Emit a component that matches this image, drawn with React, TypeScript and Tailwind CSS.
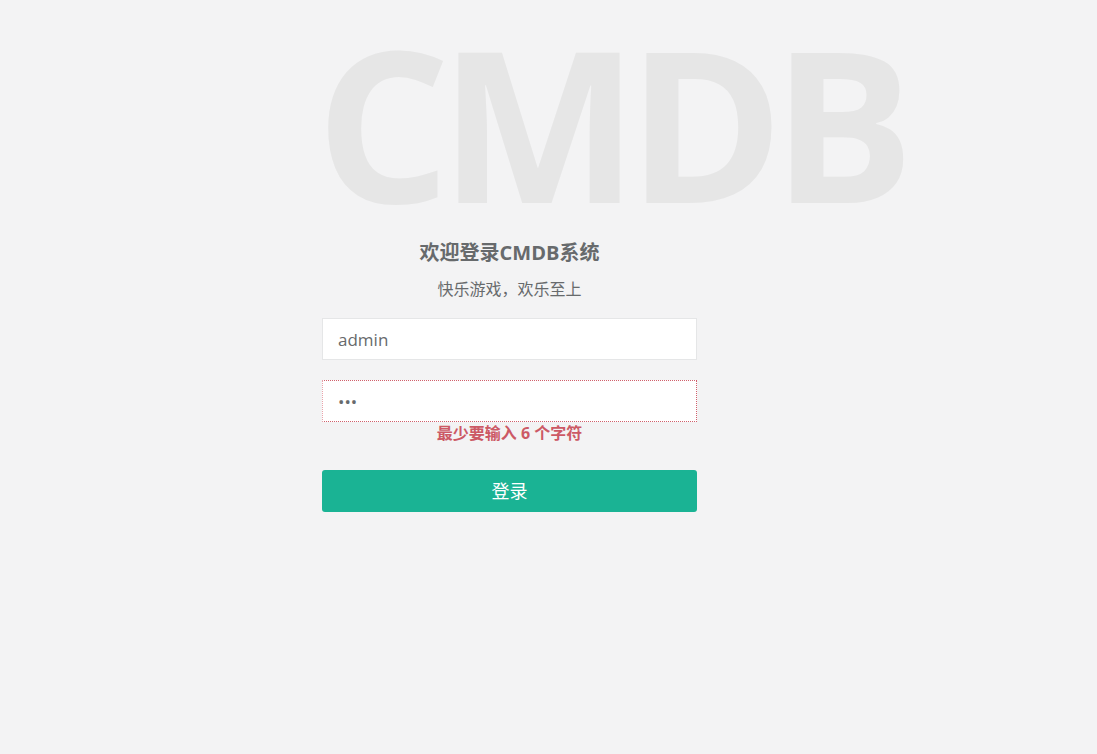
const font = { fontFamily: '"Open Sans", "Noto Sans CJK SC", sans-serif' };

export default function App() {
  return (
    <div
      className="min-h-[754px] w-full bg-[#f3f3f4] text-[#676a6c]"
      style={font}
    >
      <div className="ml-[322px] w-[375px] pt-[21px] text-center">
        <h1 className="-ml-[6px] h-[200px] w-max whitespace-nowrap text-left text-[211px] font-bold leading-[200px] tracking-[-11px] text-[#e6e6e6]">
          CMDB
        </h1>
        <h3 className="mt-[18px] text-[20px] font-bold leading-[28px]">欢迎登录CMDB系统</h3>
        <p className="mt-[11px] text-[16px] leading-[22px]">快乐游戏，欢乐至上</p>
        <form className="mt-[18px] flex flex-col">
          <input
            type="text"
            defaultValue="admin"
            className="h-[42px] w-full border border-[#e5e6e7] bg-white px-[15px] text-[17px] text-[#676a6c] outline-none"
            style={font}
          />
          <input
            type="password"
            defaultValue="abc"
            className="mt-[20px] h-[42px] w-full border border-dotted border-[#d0606c] border-l-solid border-l-[#eaa3aa] bg-white px-[15px] text-[17px] text-[#676a6c] outline-none"
            style={font}
          />
          <label className="text-[16px] font-bold leading-[22px] text-[#cc5965]">
            最少要输入 6 个字符
          </label>
          <button
            type="button"
            className="mt-[26px] h-[42px] w-full rounded-[3px] bg-[#1ab394] text-[18px] text-white"
            style={font}
          >
            登录
          </button>
        </form>
      </div>
    </div>
  );
}
